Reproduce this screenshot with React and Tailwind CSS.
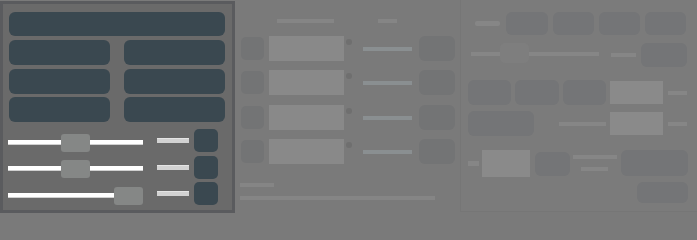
import React from "react";

const DARK = "bg-[#3a4850]";

function Slider({ value }) {
  const left = (value / 100) * (135 - 29);
  return (
    <div className="relative w-[135px] h-[5px] mt-[3px] ml-[-1px] bg-white border-b border-[#cfcfcf] shrink-0">
      <div
        className="absolute top-[-6px] w-[29px] h-[18px] rounded-[3px] bg-[#858786]"
        style={{ left: `${left}px` }}
      />
    </div>
  );
}

function LeftPanel() {
  const sliders = [50, 50, 100];
  return (
    <div className="w-[235px] h-[212px] mt-[1px] shrink-0 box-border border-[3px] border-[#5a5b5e] bg-[#6a6a6a] pt-[8px] pl-[6px] pr-[7px]">
      <div className={`h-[24px] rounded-[6px] ${DARK}`} />
      <div className="mt-[4px] grid grid-cols-2 gap-x-[14px] gap-y-[3.5px]">
        {Array.from({ length: 6 }).map((_, i) => (
          <div key={i} className={`h-[25px] rounded-[6px] ${DARK}`} />
        ))}
      </div>
      <div className="mt-[7px] flex flex-col gap-[3.5px]">
        {sliders.map((v, i) => (
          <div key={i} className="flex items-center h-[23px]">
            <Slider value={v} />
            <div className="ml-[14px] w-[32px] h-[5px] bg-[#d2d2d2] border-t border-[#e4e4e4] shrink-0" />
            <div className={`ml-[5px] w-[24px] h-[23px] rounded-[5px] ${DARK} shrink-0`} />
          </div>
        ))}
      </div>
    </div>
  );
}

function Middle() {
  return (
    <div className="w-[225px] h-full shrink-0 pt-[19px]">
      <div className="flex">
        <div className="ml-[42px] w-[57px] h-[4px] bg-[#858585]" />
        <div className="ml-[44px] w-[19px] h-[4px] bg-[#858585]" />
      </div>
      <div className="mt-[13px] flex flex-col gap-[9.33px]">
        {Array.from({ length: 4 }).map((_, i) => (
          <div key={i} className="flex items-start h-[25px]">
            <div className="ml-[6px] mt-[1px] w-[23px] h-[23px] rounded-[5px] bg-[#737475]" />
            <div className="ml-[5px] w-[75px] h-[25px] bg-[#898989]" />
            <div className="ml-[2px] mt-[3px] w-[6px] h-[6px] rounded-full bg-[#6f6f6f]" />
            <div className="ml-[11px] mt-[11px] w-[49px] h-[4px] bg-[#8a8f91]" />
            <div className="ml-[7px] w-[36px] h-[25px] rounded-[6px] bg-[#737475]" />
          </div>
        ))}
      </div>
      <div className="mt-[19px] ml-[5px] w-[34px] h-[4px] bg-[#858585]" />
      <div className="mt-[9px] ml-[5px] w-[195px] h-[4px] bg-[#858585]" />
    </div>
  );
}

function Right() {
  const btn = "rounded-[6px] bg-[#747577] shrink-0";
  const bar = "bg-[#868686] shrink-0";
  const light = "bg-[#8a8a8a] shrink-0";
  return (
    <div className="w-[237px] h-[212px] shrink-0 box-border border-l border-b border-[#767676] bg-[#7b7b7b] pt-[12px]">
      <div className="flex items-center h-[23px]">
        <div className={`ml-[14px] w-[25px] h-[5px] rounded-[2px] ${bar}`} />
        <div className={`ml-[6px] w-[42px] h-[23px] ${btn}`} />
        <div className={`ml-[5px] w-[41px] h-[23px] ${btn}`} />
        <div className={`ml-[5px] w-[41px] h-[23px] ${btn}`} />
        <div className={`ml-[5px] w-[41px] h-[23px] ${btn}`} />
      </div>
      <div className="mt-[8px] flex items-start h-[24px]">
        <div className={`ml-[10px] mt-[9px] w-[29px] h-[4px] ${bar}`} />
        <div className="w-[29px] h-[20px] rounded-[5px] bg-[#7e7e7e] shrink-0" />
        <div className={`mt-[9px] w-[70px] h-[4px] ${bar}`} />
        <div className={`ml-[12px] mt-[10px] w-[25px] h-[4px] ${bar}`} />
        <div className={`ml-[5px] w-[46px] h-[24px] ${btn}`} />
      </div>
      <div className="mt-[13px] flex items-start h-[25px]">
        <div className={`ml-[7px] w-[43px] h-[25px] ${btn}`} />
        <div className={`ml-[4px] w-[44px] h-[25px] ${btn}`} />
        <div className={`ml-[4px] w-[43px] h-[25px] ${btn}`} />
        <div className={`ml-[4px] mt-[1px] w-[53px] h-[23px] ${light}`} />
        <div className={`ml-[5px] mt-[11px] w-[19px] h-[4px] ${bar}`} />
      </div>
      <div className="mt-[6px] flex items-start h-[25px]">
        <div className={`ml-[7px] w-[66px] h-[25px] ${btn}`} />
        <div className={`ml-[25px] mt-[11px] w-[47px] h-[4px] ${bar}`} />
        <div className={`ml-[4px] mt-[1px] w-[53px] h-[23px] ${light}`} />
        <div className={`ml-[5px] mt-[11px] w-[19px] h-[4px] ${bar}`} />
      </div>
      <div className="mt-[14px] flex items-start h-[27px]">
        <div className={`ml-[7px] mt-[11px] w-[11px] h-[5px] ${bar}`} />
        <div className={`ml-[3px] w-[48px] h-[27px] ${light}`} />
        <div className={`ml-[5px] mt-[2px] w-[35px] h-[24px] ${btn}`} />
        <div className="ml-[3px] flex flex-col items-start">
          <div className={`mt-[5px] w-[44px] h-[4px] ${bar}`} />
          <div className={`ml-[8px] mt-[8px] w-[27px] h-[4px] ${bar}`} />
        </div>
        <div className={`ml-[4px] w-[67px] h-[26px] ${btn}`} />
      </div>
      <div className="mt-[5px] flex">
        <div className={`ml-[176px] w-[51px] h-[21px] ${btn}`} />
      </div>
    </div>
  );
}

export default function App() {
  return (
    <div className="min-h-screen w-full bg-[#7a7a7a]">
      <div className="w-[697px] h-[219px] bg-[#7a7a7a] flex items-start overflow-hidden">
        <LeftPanel />
        <Middle />
        <Right />
      </div>
    </div>
  );
}
